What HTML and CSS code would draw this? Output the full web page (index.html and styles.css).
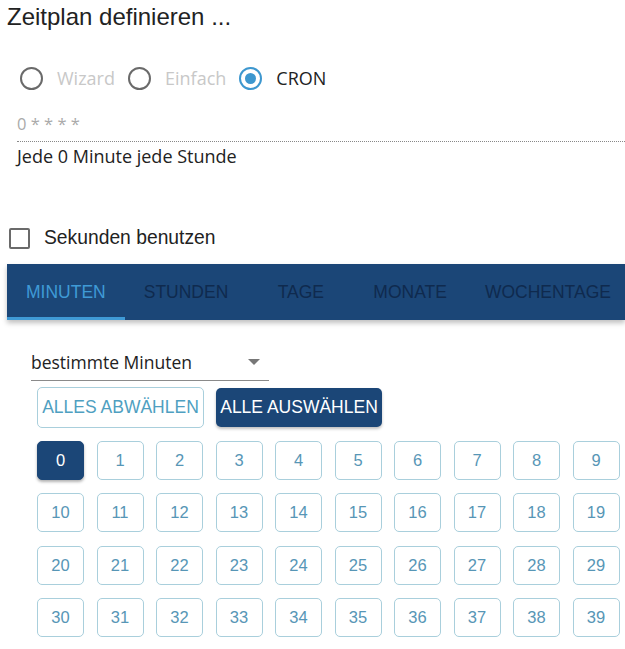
FILE: index.html
```html
<!DOCTYPE html>
<html lang="de">
<head>
<meta charset="utf-8">
<link rel="stylesheet" href="styles.css">
</head>
<body>
<h1 class="title">Zeitplan definieren ...</h1>
<div class="modes">
  <label class="radio"><span class="circle"></span><span class="rlabel muted">Wizard</span></label>
  <label class="radio"><span class="circle"></span><span class="rlabel muted">Einfach</span></label>
  <label class="radio"><span class="circle checked"></span><span class="rlabel">CRON</span></label>
</div>
<div class="cron-input">0 * * * *</div>
<div class="cron-text">Jede 0 Minute jede Stunde</div>
<label class="check"><span class="box"></span><span>Sekunden benutzen</span></label>
<div class="tabs">
  <div class="tab active">MINUTEN</div>
  <div class="tab">STUNDEN</div>
  <div class="tab">TAGE</div>
  <div class="tab">MONATE</div>
  <div class="tab">WOCHENTAGE</div>
</div>
<div class="panel">
  <div class="select"><span>bestimmte Minuten</span><span class="arrow"></span></div>
  <div class="actions">
    <button class="btn outline">ALLES ABWÄHLEN</button>
    <button class="btn filled">ALLE AUSWÄHLEN</button>
  </div>
  <div class="grid">
    <button class="num on">0</button><button class="num">1</button><button class="num">2</button><button class="num">3</button><button class="num">4</button><button class="num">5</button><button class="num">6</button><button class="num">7</button><button class="num">8</button><button class="num">9</button>
    <button class="num">10</button><button class="num">11</button><button class="num">12</button><button class="num">13</button><button class="num">14</button><button class="num">15</button><button class="num">16</button><button class="num">17</button><button class="num">18</button><button class="num">19</button>
    <button class="num">20</button><button class="num">21</button><button class="num">22</button><button class="num">23</button><button class="num">24</button><button class="num">25</button><button class="num">26</button><button class="num">27</button><button class="num">28</button><button class="num">29</button>
    <button class="num">30</button><button class="num">31</button><button class="num">32</button><button class="num">33</button><button class="num">34</button><button class="num">35</button><button class="num">36</button><button class="num">37</button><button class="num">38</button><button class="num">39</button>
  </div>
</div>
</body>
</html>
```
FILE: styles.css
```css
html, body { margin: 0; padding: 0; background: #fff; overflow: hidden; }
body { width: 625px; height: 649px; font-family: "Liberation Sans", Arial, sans-serif; color: #222; }

.title { margin: 0; padding: 3px 0 0 7px; font-size: 24px; font-weight: normal; line-height: 28px; color: #222; }

.modes { display: flex; align-items: center; margin: 35px 0 0 20px; height: 24px; }
.radio { display: flex; align-items: center; margin-right: 13px; }
.circle { width: 19px; height: 19px; border: 2px solid #6a6a6a; border-radius: 50%; box-sizing: content-box; position: relative; }
.circle.checked { border-color: #3d97cf; }
.circle.checked::after { content: ""; position: absolute; left: 4px; top: 4px; width: 11px; height: 11px; border-radius: 50%; background: #3d97cf; }
.rlabel { font-family: "Open Sans", "Noto Sans", sans-serif; font-size: 18px; margin-left: 14px; color: #222; }
.rlabel.muted { color: #c8c8c8; }

.cron-input { margin: 23px 0 0 17px; font-family: "Open Sans", sans-serif; font-size: 16.5px; color: #aaa; line-height: 22px; padding-bottom: 6px; border-bottom: 1px dotted #888; }
.cron-text { margin: 2px 0 0 17px; font-family: "Open Sans", sans-serif; font-size: 18px; color: #222; line-height: 24px; }

.check { display: flex; align-items: center; margin: 59px 0 0 9px; height: 22px; font-size: 19.3px; color: #222; }
.box { width: 17px; height: 17px; border: 2px solid #6a6a6a; border-radius: 2px; margin-right: 14px; }

.tabs { display: flex; margin: 15px 0 0 7px; height: 56px; background: #1b4677; box-shadow: 0 3px 5px rgba(0,0,0,0.25); overflow: hidden; }
.tab { flex-shrink: 0; min-width: 107px; padding: 0 19px; box-sizing: border-box; display: flex; align-items: center; justify-content: center; font-size: 17.5px; color: #0f2a4e; height: 56px; }
.tab.active { color: #3f9ad6; box-shadow: inset 0 -3px 0 #3f9ad6; }

.panel { padding: 0 0 0 31px; }
.select { width: 238px; height: 37px; margin-top: 24px; display: flex; align-items: center; justify-content: space-between; border-bottom: 1px solid #8a8a8a; box-sizing: border-box; font-family: "Open Sans", sans-serif; font-size: 17.5px; color: #222; padding-right: 9px; }
.arrow { width: 0; height: 0; border-left: 6px solid transparent; border-right: 6px solid transparent; border-top: 6px solid #777; }

.actions { display: flex; gap: 12px; margin: 6px 0 0 6px; align-items: center; }
.btn { font-family: "Liberation Sans", Arial, sans-serif; font-size: 17.5px; border-radius: 5px; height: 41px; padding: 0; cursor: pointer; }
.btn.outline { background: #fff; border: 1px solid #a9cfdc; color: #4f9fc1; width: 167px; }
.btn.filled { background: #1b4677; border: none; color: #fff; width: 166px; height: 39px; box-shadow: 0 2px 3px rgba(0,0,0,0.25); }

.grid { display: grid; grid-template-columns: repeat(10, 47px); column-gap: 12.5px; row-gap: 13.3px; margin: 13px 0 0 6px; }
.num { height: 39px; width: 47px; background: #fff; border: 1px solid #a9cfdc; border-radius: 5px; font-family: "Liberation Sans", Arial, sans-serif; font-size: 16.5px; color: #5796b6; padding: 0; }
.num.on { background: #1b4677; border-color: #1b4677; color: #fff; box-shadow: 0 2px 3px rgba(0,0,0,0.3); }
```
